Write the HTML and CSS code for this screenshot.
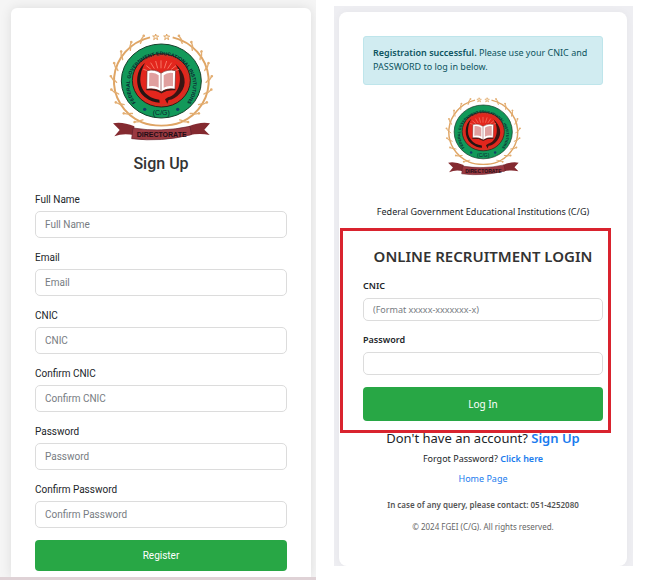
FILE: index.html
```
<!DOCTYPE html>
<html lang="en">
<head>
    <meta charset="UTF-8">
    <meta name="viewport" content="width=device-width, initial-scale=1.0">
    <title>FGEI - Sign Up & Login</title>
    <link rel="stylesheet" href="styles.css">
</head>
<body>
    <main class="screens">
        <!-- Sign up -->
        <section class="panel signup-panel">
            <div class="card signup-card">
                <svg class="logo" viewBox="50 38 324 330" role="img" aria-label="FGEI Directorate">
                    <defs>
                        <g id="leaf">
                            <path d="M2 -144 Q-3 -148 -9 -151 M0 -143 Q4 -138 9 -134" stroke="#e3ae72" stroke-width="4" stroke-linecap="round"/>
                            <circle cx="-10" cy="-152" r="4" fill="#e3ae72"/>
                        </g>
                        <g id="leaves">
                            <use href="#leaf" transform="rotate(24)"/>
                            <use href="#leaf" transform="rotate(40)"/>
                            <use href="#leaf" transform="rotate(56)"/>
                            <use href="#leaf" transform="rotate(72)"/>
                            <use href="#leaf" transform="rotate(88)"/>
                            <use href="#leaf" transform="rotate(104)"/>
                            <use href="#leaf" transform="rotate(120)"/>
                            <use href="#leaf" transform="rotate(136)"/>
                            <use href="#leaf" transform="rotate(152)"/>
                        </g>
                        <path id="star" d="M0 -9 L2 -3 L9 -3 L4 2 L6 8 L0 4 L-6 8 L-4 2 L-9 -3 L-2 -3 Z" fill="#fff3df" stroke="#dfa565" stroke-width="3"/>
                        <path id="ring" d="M140 252 A95 90 0 1 1 286 252" fill="none"/>
                        <symbol id="emblem" viewBox="50 38 324 330">
                            <!-- wreath -->
                            <g transform="translate(213 182) scale(1 .95)" fill="none">
                                <path d="M-34 -138 A143 143 0 0 0 -58 131 Q-35 141 0 141 Q35 141 58 131 A143 143 0 0 0 34 -138" stroke="#dfa565" stroke-width="6"/>
                                <use href="#leaves"/>
                                <use href="#leaves" transform="scale(-1 1)"/>
                            </g>
                            <use href="#star" x="196" y="50"/>
                            <use href="#star" x="229" y="50"/>
                            <!-- rings -->
                            <ellipse cx="213" cy="182" rx="120" ry="111" fill="#12995a" stroke="#17402c" stroke-width="3"/>
                            <ellipse cx="213" cy="180" rx="87" ry="80" fill="#e3261d" stroke="#2c2017" stroke-width="3"/>
                            <ellipse cx="213" cy="180" rx="81" ry="74" fill="none" stroke="#a94a31" stroke-width="2"/>
                            <text font-family="Liberation Sans, sans-serif" font-size="15" font-weight="700" fill="#0b2330"><textPath href="#ring" startOffset="50%" text-anchor="middle">FEDERAL GOVERNMENT EDUCATIONAL INSTITUTIONS</textPath></text>
                            <text x="213" y="285" text-anchor="middle" font-family="Liberation Sans, sans-serif" font-size="21" fill="#0b2330">(C/G)</text>
                            <circle cx="163" cy="267" r="5" fill="#123f68"/>
                            <circle cx="262" cy="267" r="5" fill="#123f68"/>
                            <!-- pen and sword around the book -->
                            <path d="M164 128 C134 151 132 205 163 230 C177 242 193 247 208 247 L207 238 C170 235 144 204 151 165 C153 150 158 139 164 128Z" fill="#241513"/>
                            <path d="M255 130 C286 157 292 193 270 218 C258 232 247 238 235 239 L231 250 L224 237 L233 231 C267 224 282 171 255 130Z" fill="#3a1513"/>
                            <path d="M212 144V120M202 144L196 122M222 144L229 122M192 145L181 127M232 145L244 127M183 148L168 136M242 148L257 136M174 152L159 147M250 152L266 147" stroke="#ff9d88" stroke-width="2"/>
                            <path d="M170 151 Q194 145 212 159 Q231 145 256 151 L254 207 Q230 202 213 215 Q195 202 169 207Z" fill="#fff" stroke="#6e2420" stroke-width="2"/>
                            <path d="M177 158Q194 155 205 165V202Q193 194 176 198ZM220 165Q231 155 248 158V198Q232 195 220 202Z" fill="#e0a09f"/>
                            <path d="M212 160V213" fill="none" stroke="#7c3034" stroke-width="2"/>
                            <path d="M168 208Q195 205 213 217Q231 205 255 208" fill="none" stroke="#3b1815" stroke-width="4"/>
                            <!-- ribbon -->
                            <path d="M68 309Q96 303 132 318V345Q100 337 72 348L88 329Z" fill="#842a30"/>
                            <path d="M359 309Q331 303 295 318V345Q327 337 358 344L342 328Z" fill="#842a30"/>
                            <path d="M128 323Q213 337 299 318L303 343Q214 366 124 355Z" fill="#9a3941" stroke="#61202a" stroke-width="2"/>
                            <text x="214" y="350" text-anchor="middle" font-family="Liberation Sans, sans-serif" font-size="21" font-weight="700" fill="#230d16">DIRECTORATE</text>
                        </symbol>
                    </defs>
                    <use href="#emblem" x="50" y="38" width="324" height="330"/>
                </svg>
                <h2 class="signup-title">Sign Up</h2>
                <form>
                    <div class="field">
                        <label for="fullName">Full Name</label>
                        <input type="text" id="fullName" placeholder="Full Name">
                    </div>
                    <div class="field">
                        <label for="email">Email</label>
                        <input type="email" id="email" placeholder="Email">
                    </div>
                    <div class="field">
                        <label for="cnic">CNIC</label>
                        <input type="text" id="cnic" placeholder="CNIC">
                    </div>
                    <div class="field">
                        <label for="confirmCnic">Confirm CNIC</label>
                        <input type="text" id="confirmCnic" placeholder="Confirm CNIC">
                    </div>
                    <div class="field">
                        <label for="password">Password</label>
                        <input type="password" id="password" placeholder="Password">
                    </div>
                    <div class="field">
                        <label for="confirmPassword">Confirm Password</label>
                        <input type="password" id="confirmPassword" placeholder="Confirm Password">
                    </div>
                    <button type="submit">Register</button>
                </form>
            </div>
        </section>

        <!-- Login -->
        <section class="panel login-panel">
            <div class="card login-card">
                <div class="alert"><strong>Registration successful.</strong> Please use your CNIC and PASSWORD to log in below.</div>
                <svg class="logo logo-small" viewBox="50 38 324 330" role="img" aria-label="FGEI Directorate">
                    <use href="#emblem" x="50" y="38" width="324" height="330"/>
                </svg>
                <p class="institution">Federal Government Educational Institutions (C/G)</p>
                <form class="login-form">
                    <h2 class="login-title">ONLINE RECRUITMENT LOGIN</h2>
                    <div class="field">
                        <label for="loginCnic">CNIC</label>
                        <input type="text" id="loginCnic" placeholder="(Format xxxxx-xxxxxxx-x)">
                    </div>
                    <div class="field">
                        <label for="loginPassword">Password</label>
                        <input type="password" id="loginPassword">
                    </div>
                    <button type="submit">Log In</button>
                </form>
                <p class="account">Don't have an account? <a href="#fullName">Sign Up</a></p>
                <p class="forgot">Forgot Password? <a href="#forgot">Click here</a></p>
                <p class="home"><a href="#home">Home Page</a></p>
                <p class="contact">In case of any query, please contact: 051-4252080</p>
                <p class="copyright">© 2024 FGEI (C/G). All rights reserved.</p>
            </div>
        </section>
    </main>
</body>
</html>
```
FILE: styles.css
```
* {
    box-sizing: border-box;
}

body {
    margin: 0;
    background-color: #fff;
    color: #212529;
    font-family: Roboto, sans-serif;
    font-size: 10px;
}

h2,
p {
    margin: 0;
    text-align: center;
}

.screens {
    display: grid;
    grid-template-columns: 316fr 299fr;
    gap: 18px;
    align-items: start;
    padding-right: 13px;
}

.panel {
    overflow: hidden;
}

.card {
    background-color: #fff;
    border-radius: 6px;
}

.signup-panel {
    padding: 8px 5px 0 11px;
    background-color: #f5f5f5;
    border-bottom: 3px solid #dfd2d6;
}

.signup-card {
    padding: 25px 24px 6px;
    border-radius: 6px 6px 0 0;
    box-shadow: 0 0 12px rgba(0, 0, 0, 0.1);
}

.logo {
    display: block;
    width: 108px;
    height: 110px;
    margin: 0 auto;
}

.signup-title {
    margin: 11px 0 18px;
    font-size: 16px;
    font-weight: 500;
    line-height: 20px;
    color: #333;
}

.field {
    margin-bottom: 12px;
}

label {
    display: block;
    margin-bottom: 4px;
    font-size: 10px;
    line-height: 15px;
}

input {
    display: block;
    width: 100%;
    height: 27px;
    padding: 0 9px;
    border: 1px solid #dcdcdc;
    border-radius: 5px;
    background-color: #fff;
    font-family: inherit;
    font-size: 10px;
}

input::placeholder {
    color: #777c82;
}

button {
    display: block;
    width: 100%;
    height: 31px;
    border: none;
    border-radius: 4px;
    background-color: #28a745;
    color: #fff;
    font-family: inherit;
    font-size: 10px;
    cursor: pointer;
}

a {
    color: #1a7cee;
    text-decoration: none;
}

/* Login screen */
.login-panel {
    margin-top: 6px;
    padding: 6px 6px 0 5px;
    background-color: #eeeef2;
    font-family: "Noto Sans", sans-serif;
    font-size: 9px;
}

.login-card {
    padding: 24px 24px 32px;
    border-radius: 8px;
    box-shadow: 0 0 8px rgba(0, 0, 0, 0.04);
}

.alert {
    padding: 9px;
    padding-bottom: 10px;
    border: 1px solid #bee5eb;
    border-radius: 3px;
    background-color: #d1ecf1;
    color: #0c5460;
    line-height: 14px;
}

.alert strong {
    font-weight: 600;
}

.logo-small {
    width: 80px;
    height: 80px;
    margin-top: 12px;
}

.institution {
    margin-top: 28px;
    line-height: 14px;
}

.login-form {
    position: relative;
    margin-top: 27px;
}

/* Red frame drawn over the form and the line below it */
.login-form::after {
    content: "";
    position: absolute;
    inset: -18px -8px -12px -23px;
    border: 3px solid #d9232e;
    pointer-events: none;
}

.login-title {
    margin-bottom: 13px;
    font-size: 15px;
    font-weight: 600;
    line-height: 20px;
    color: #333;
}

.login-form label {
    margin-bottom: 5px;
    font-size: 9px;
    font-weight: 600;
    line-height: 14px;
}

.login-form input {
    height: 23px;
    font-size: 9px;
}

.login-form button {
    height: 34px;
    font-size: 10px;
}

.account {
    margin-top: 8px;
    font-size: 13px;
    line-height: 18px;
}

.account a,
.forgot a {
    font-weight: 600;
}

.forgot {
    margin-top: 5px;
    line-height: 14px;
}

.home {
    margin-top: 6px;
    line-height: 14px;
}

.contact {
    margin-top: 12px;
    font-size: 8px;
    font-weight: 600;
    line-height: 14px;
    color: #555;
}

.copyright {
    margin-top: 8px;
    font-size: 8px;
    line-height: 14px;
    color: #666;
}
```
